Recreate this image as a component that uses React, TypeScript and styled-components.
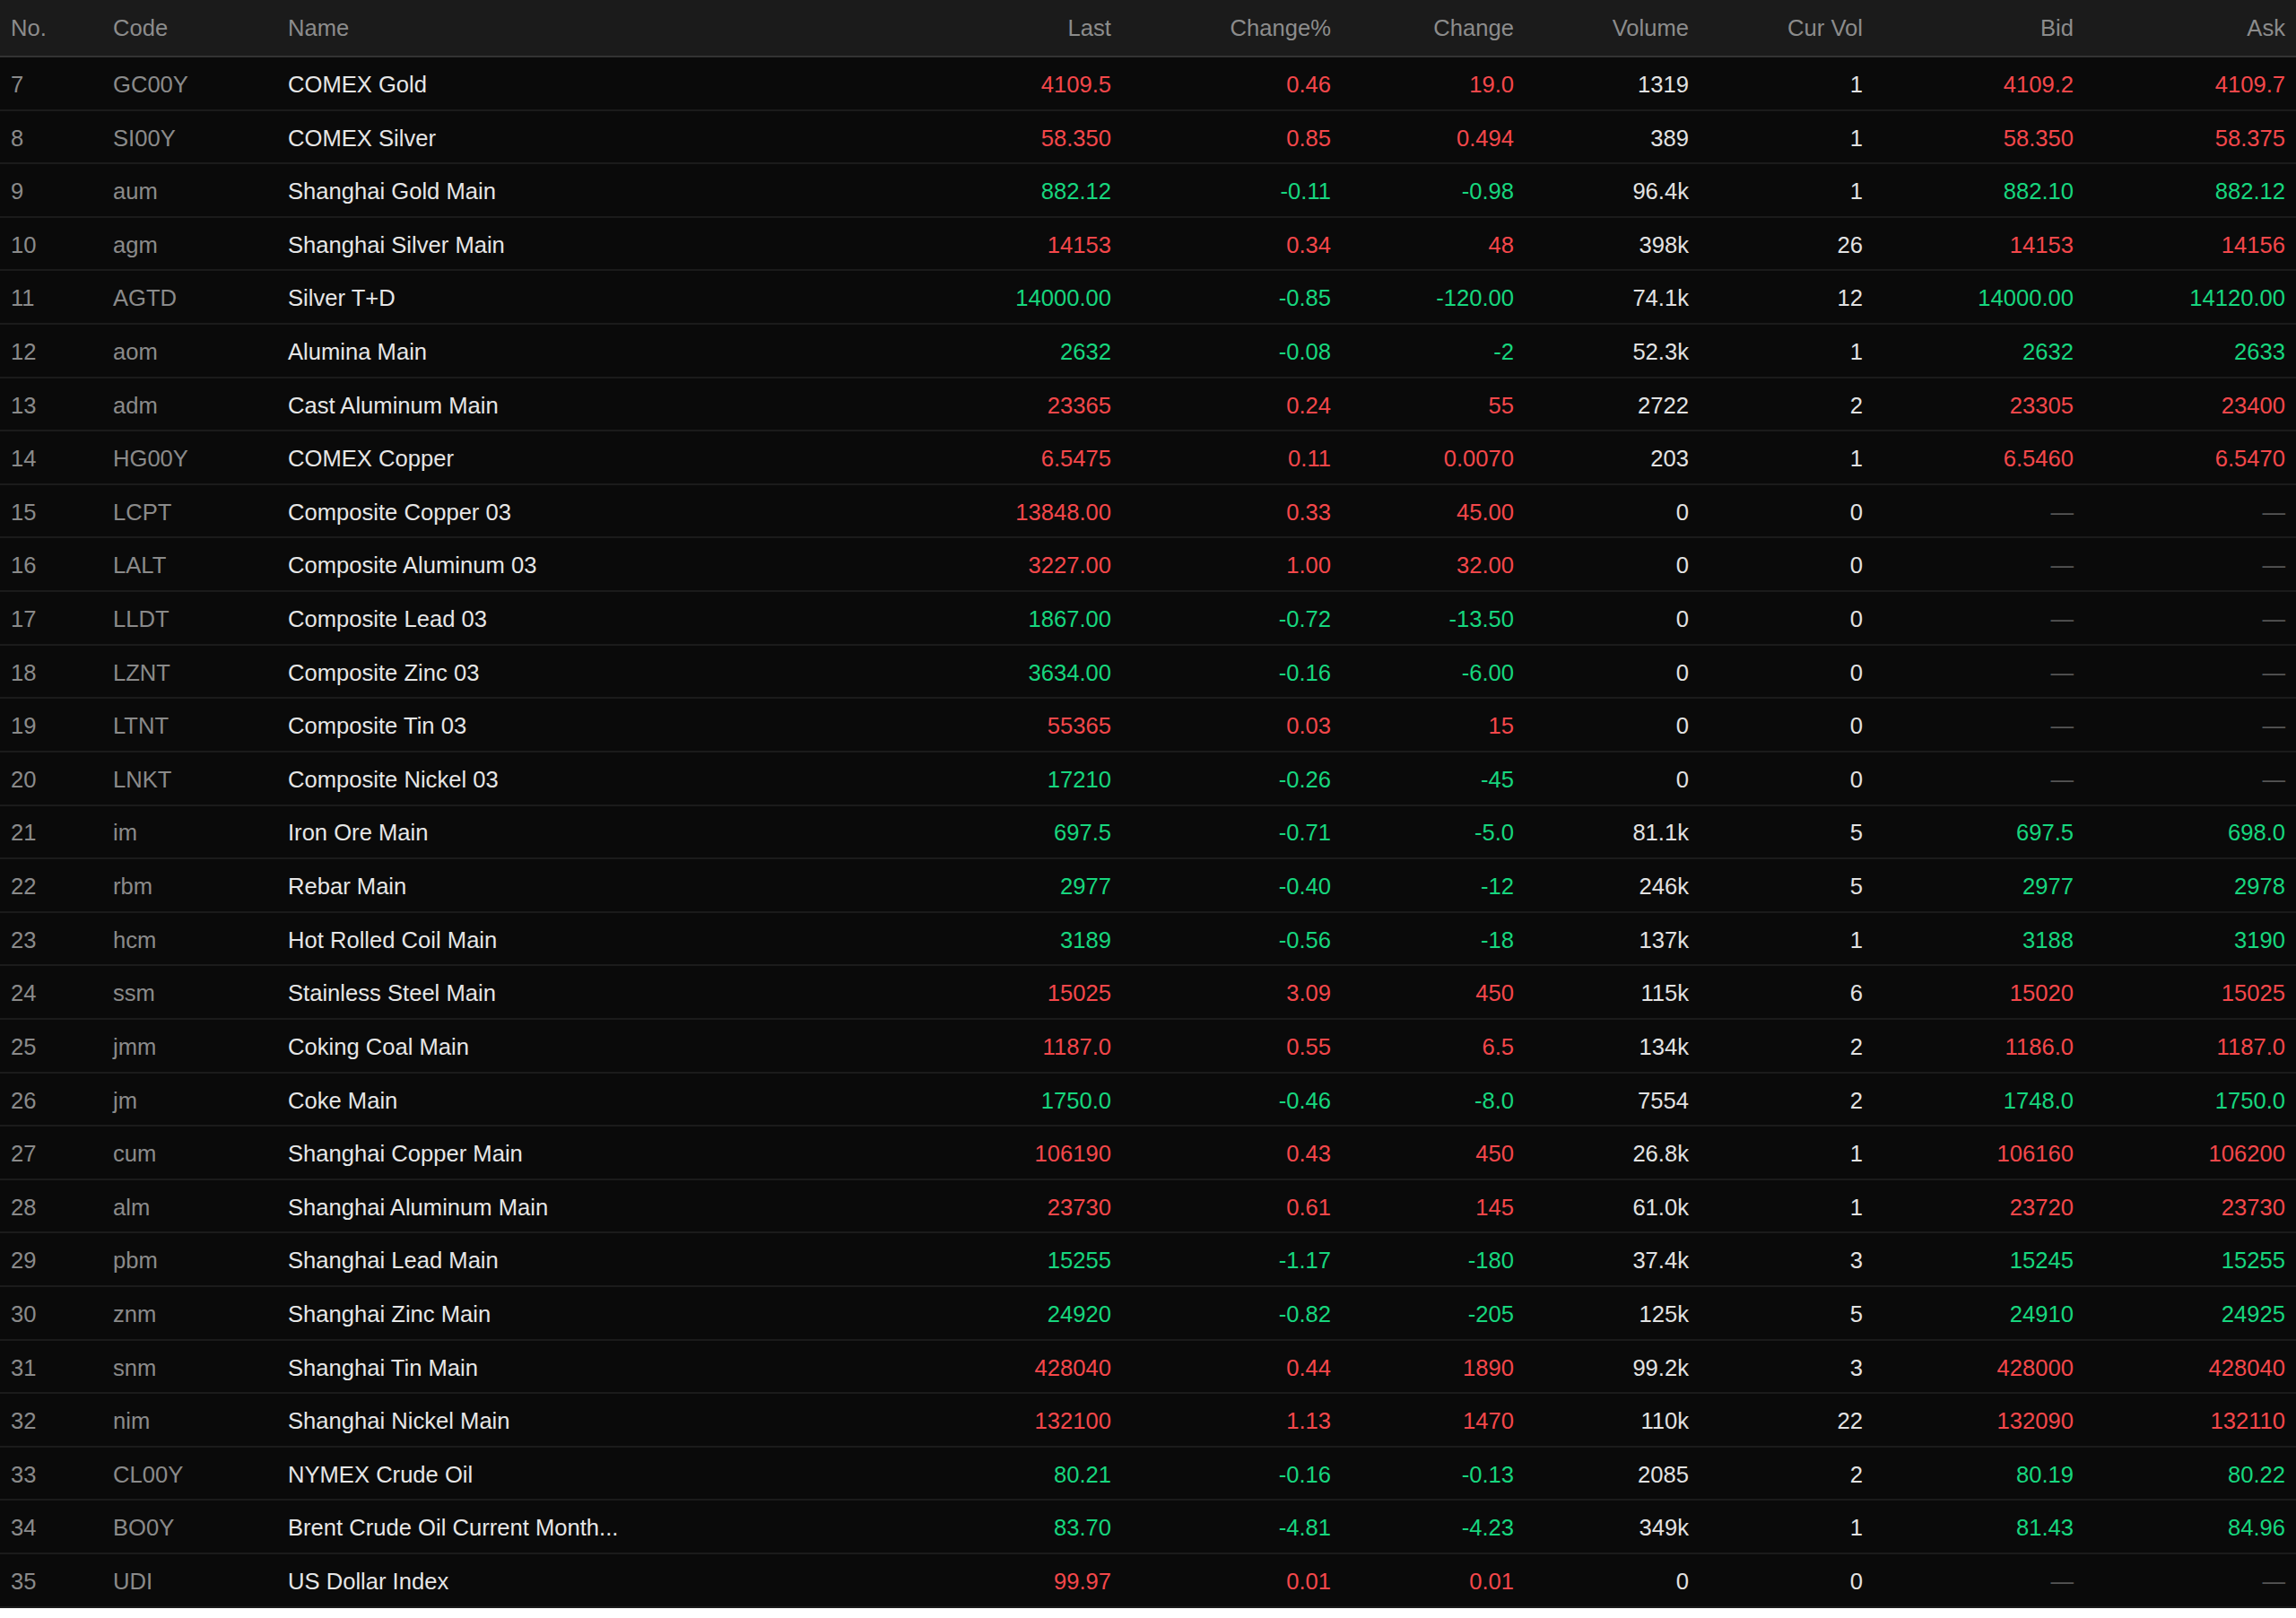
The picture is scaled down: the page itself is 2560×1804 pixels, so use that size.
import React from "react";
import styled, { createGlobalStyle } from "styled-components";

const GlobalStyle = createGlobalStyle`
  html, body {
    margin: 0;
    padding: 0;
    background: #ffffff;
  }
  * { box-sizing: border-box; }
`;

type Dir = "up" | "down";

interface Row {
  no: number;
  code: string;
  name: string;
  last: string;
  pct: string;
  chg: string;
  vol: string;
  cur: string;
  bid: string | null;
  ask: string | null;
  dir: Dir;
}

const rows: Row[] = [
  { no: 7, code: "GC00Y", name: "COMEX Gold", last: "4109.5", pct: "0.46", chg: "19.0", vol: "1319", cur: "1", bid: "4109.2", ask: "4109.7", dir: "up" },
  { no: 8, code: "SI00Y", name: "COMEX Silver", last: "58.350", pct: "0.85", chg: "0.494", vol: "389", cur: "1", bid: "58.350", ask: "58.375", dir: "up" },
  { no: 9, code: "aum", name: "Shanghai Gold Main", last: "882.12", pct: "-0.11", chg: "-0.98", vol: "96.4k", cur: "1", bid: "882.10", ask: "882.12", dir: "down" },
  { no: 10, code: "agm", name: "Shanghai Silver Main", last: "14153", pct: "0.34", chg: "48", vol: "398k", cur: "26", bid: "14153", ask: "14156", dir: "up" },
  { no: 11, code: "AGTD", name: "Silver T+D", last: "14000.00", pct: "-0.85", chg: "-120.00", vol: "74.1k", cur: "12", bid: "14000.00", ask: "14120.00", dir: "down" },
  { no: 12, code: "aom", name: "Alumina Main", last: "2632", pct: "-0.08", chg: "-2", vol: "52.3k", cur: "1", bid: "2632", ask: "2633", dir: "down" },
  { no: 13, code: "adm", name: "Cast Aluminum Main", last: "23365", pct: "0.24", chg: "55", vol: "2722", cur: "2", bid: "23305", ask: "23400", dir: "up" },
  { no: 14, code: "HG00Y", name: "COMEX Copper", last: "6.5475", pct: "0.11", chg: "0.0070", vol: "203", cur: "1", bid: "6.5460", ask: "6.5470", dir: "up" },
  { no: 15, code: "LCPT", name: "Composite Copper 03", last: "13848.00", pct: "0.33", chg: "45.00", vol: "0", cur: "0", bid: null, ask: null, dir: "up" },
  { no: 16, code: "LALT", name: "Composite Aluminum 03", last: "3227.00", pct: "1.00", chg: "32.00", vol: "0", cur: "0", bid: null, ask: null, dir: "up" },
  { no: 17, code: "LLDT", name: "Composite Lead 03", last: "1867.00", pct: "-0.72", chg: "-13.50", vol: "0", cur: "0", bid: null, ask: null, dir: "down" },
  { no: 18, code: "LZNT", name: "Composite Zinc 03", last: "3634.00", pct: "-0.16", chg: "-6.00", vol: "0", cur: "0", bid: null, ask: null, dir: "down" },
  { no: 19, code: "LTNT", name: "Composite Tin 03", last: "55365", pct: "0.03", chg: "15", vol: "0", cur: "0", bid: null, ask: null, dir: "up" },
  { no: 20, code: "LNKT", name: "Composite Nickel 03", last: "17210", pct: "-0.26", chg: "-45", vol: "0", cur: "0", bid: null, ask: null, dir: "down" },
  { no: 21, code: "im", name: "Iron Ore Main", last: "697.5", pct: "-0.71", chg: "-5.0", vol: "81.1k", cur: "5", bid: "697.5", ask: "698.0", dir: "down" },
  { no: 22, code: "rbm", name: "Rebar Main", last: "2977", pct: "-0.40", chg: "-12", vol: "246k", cur: "5", bid: "2977", ask: "2978", dir: "down" },
  { no: 23, code: "hcm", name: "Hot Rolled Coil Main", last: "3189", pct: "-0.56", chg: "-18", vol: "137k", cur: "1", bid: "3188", ask: "3190", dir: "down" },
  { no: 24, code: "ssm", name: "Stainless Steel Main", last: "15025", pct: "3.09", chg: "450", vol: "115k", cur: "6", bid: "15020", ask: "15025", dir: "up" },
  { no: 25, code: "jmm", name: "Coking Coal Main", last: "1187.0", pct: "0.55", chg: "6.5", vol: "134k", cur: "2", bid: "1186.0", ask: "1187.0", dir: "up" },
  { no: 26, code: "jm", name: "Coke Main", last: "1750.0", pct: "-0.46", chg: "-8.0", vol: "7554", cur: "2", bid: "1748.0", ask: "1750.0", dir: "down" },
  { no: 27, code: "cum", name: "Shanghai Copper Main", last: "106190", pct: "0.43", chg: "450", vol: "26.8k", cur: "1", bid: "106160", ask: "106200", dir: "up" },
  { no: 28, code: "alm", name: "Shanghai Aluminum Main", last: "23730", pct: "0.61", chg: "145", vol: "61.0k", cur: "1", bid: "23720", ask: "23730", dir: "up" },
  { no: 29, code: "pbm", name: "Shanghai Lead Main", last: "15255", pct: "-1.17", chg: "-180", vol: "37.4k", cur: "3", bid: "15245", ask: "15255", dir: "down" },
  { no: 30, code: "znm", name: "Shanghai Zinc Main", last: "24920", pct: "-0.82", chg: "-205", vol: "125k", cur: "5", bid: "24910", ask: "24925", dir: "down" },
  { no: 31, code: "snm", name: "Shanghai Tin Main", last: "428040", pct: "0.44", chg: "1890", vol: "99.2k", cur: "3", bid: "428000", ask: "428040", dir: "up" },
  { no: 32, code: "nim", name: "Shanghai Nickel Main", last: "132100", pct: "1.13", chg: "1470", vol: "110k", cur: "22", bid: "132090", ask: "132110", dir: "up" },
  { no: 33, code: "CL00Y", name: "NYMEX Crude Oil", last: "80.21", pct: "-0.16", chg: "-0.13", vol: "2085", cur: "2", bid: "80.19", ask: "80.22", dir: "down" },
  { no: 34, code: "BO0Y", name: "Brent Crude Oil Current Month...", last: "83.70", pct: "-4.81", chg: "-4.23", vol: "349k", cur: "1", bid: "81.43", ask: "84.96", dir: "down" },
  { no: 35, code: "UDI", name: "US Dollar Index", last: "99.97", pct: "0.01", chg: "0.01", vol: "0", cur: "0", bid: null, ask: null, dir: "up" },
];

const COLS = "114px 195px 1fr 330px 245px 204px 195px 194px 235px 236px";

const Table = styled.div`
  width: 100%;
  background: #0a0a0a;
  font-family: "Liberation Sans", Arial, Helvetica, sans-serif;
  font-size: 25.6px;
  line-height: 1.2;
`;

const HeaderRow = styled.div`
  display: grid;
  grid-template-columns: ${COLS};
  align-items: center;
  height: 64px;
  background: #1b1b1b;
  border-bottom: 2px solid #333333;
`;

const HeadCell = styled.div<{ $right?: boolean }>`
  padding: 0 12px;
  color: #8c8c8c;
  text-align: ${(p) => (p.$right ? "right" : "left")};
  white-space: nowrap;
`;

const BodyRow = styled.div`
  display: grid;
  grid-template-columns: ${COLS};
  align-items: center;
  height: 59.62px;
  padding-top: 3px;
  background: #0a0a0a;
  border-bottom: 2px solid #1b1b1b;
`;

type Tone = "muted" | "name" | "plain" | "up" | "down" | "dash";

const toneColor: Record<Tone, string> = {
  muted: "#8a8a8a",
  name: "#e6e6e6",
  plain: "#e2e2e2",
  up: "#f4474a",
  down: "#17d67e",
  dash: "#555555",
};

const Cell = styled.div<{ $right?: boolean; $tone: Tone }>`
  padding: 0 12px;
  color: ${(p) => toneColor[p.$tone]};
  text-align: ${(p) => (p.$right ? "right" : "left")};
  white-space: nowrap;
  overflow: hidden;
  text-overflow: ellipsis;
`;

const headers: { label: string; right?: boolean }[] = [
  { label: "No." },
  { label: "Code" },
  { label: "Name" },
  { label: "Last", right: true },
  { label: "Change%", right: true },
  { label: "Change", right: true },
  { label: "Volume", right: true },
  { label: "Cur Vol", right: true },
  { label: "Bid", right: true },
  { label: "Ask", right: true },
];

function Quote({ value, dir }: { value: string | null; dir: Dir }) {
  if (value === null) {
    return (
      <Cell $right $tone="dash">
        —
      </Cell>
    );
  }
  return (
    <Cell $right $tone={dir}>
      {value}
    </Cell>
  );
}

export default function App() {
  return (
    <>
      <GlobalStyle />
      <Table>
        <HeaderRow>
          {headers.map((h) => (
            <HeadCell key={h.label} $right={h.right}>
              {h.label}
            </HeadCell>
          ))}
        </HeaderRow>
        {rows.map((r) => (
          <BodyRow key={r.no}>
            <Cell $tone="muted">{r.no}</Cell>
            <Cell $tone="muted">{r.code}</Cell>
            <Cell $tone="name">{r.name}</Cell>
            <Cell $right $tone={r.dir}>
              {r.last}
            </Cell>
            <Cell $right $tone={r.dir}>
              {r.pct}
            </Cell>
            <Cell $right $tone={r.dir}>
              {r.chg}
            </Cell>
            <Cell $right $tone="plain">
              {r.vol}
            </Cell>
            <Cell $right $tone="plain">
              {r.cur}
            </Cell>
            <Quote value={r.bid} dir={r.dir} />
            <Quote value={r.ask} dir={r.dir} />
          </BodyRow>
        ))}
      </Table>
    </>
  );
}
